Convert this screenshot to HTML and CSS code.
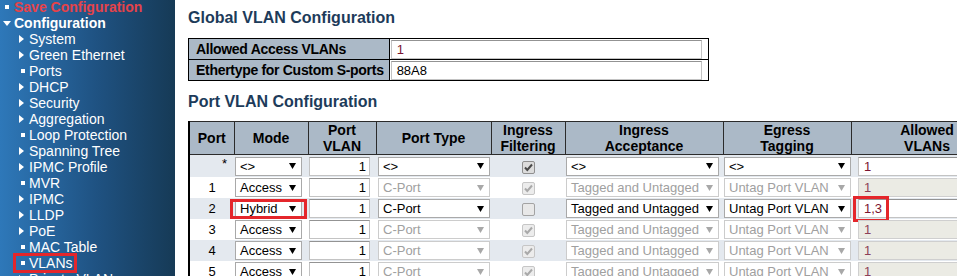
FILE: index.html
```html
<!DOCTYPE html>
<html lang="en">
<head>
    <meta charset="UTF-8">
    <title>VLAN Configuration</title>
    <link rel="stylesheet" href="styles.css">
</head>
<body>

    <nav class="menu">
        <ul>
            <li class="save"><i class="dot"></i>Save Configuration</li>
            <li class="group"><i class="down"></i>Configuration</li>
            <li class="item"><i class="more"></i>System</li>
            <li class="item"><i class="more"></i>Green Ethernet</li>
            <li class="item"><i class="dot"></i>Ports</li>
            <li class="item"><i class="more"></i>DHCP</li>
            <li class="item"><i class="more"></i>Security</li>
            <li class="item"><i class="more"></i>Aggregation</li>
            <li class="item"><i class="dot"></i>Loop Protection</li>
            <li class="item"><i class="more"></i>Spanning Tree</li>
            <li class="item"><i class="more"></i>IPMC Profile</li>
            <li class="item"><i class="dot"></i>MVR</li>
            <li class="item"><i class="more"></i>IPMC</li>
            <li class="item"><i class="more"></i>LLDP</li>
            <li class="item"><i class="more"></i>PoE</li>
            <li class="item"><i class="dot"></i>MAC Table</li>
            <li class="item marked"><i class="dot"></i>VLANs</li>
            <li class="item"><i class="more"></i>Private VLANs</li>
        </ul>
    </nav>

    <main class="content">
        <h1>Global VLAN Configuration</h1>
        <table class="config global">
            <tr>
                <th>Allowed Access VLANs</th>
                <td><div class="field vlan-text">1</div></td>
            </tr>
            <tr>
                <th>Ethertype for Custom S-ports</th>
                <td><div class="field">88A8</div></td>
            </tr>
        </table>

        <h1 class="second">Port VLAN Configuration</h1>
        <table class="config ports">
            <colgroup>
                <col class="c-port">
                <col class="c-mode">
                <col class="c-pvid">
                <col class="c-type">
                <col class="c-filter">
                <col class="c-accept">
                <col class="c-egress">
                <col class="c-allowed">
            </colgroup>
            <thead>
                <tr>
                    <th>Port</th>
                    <th>Mode</th>
                    <th>Port<br>VLAN</th>
                    <th>Port Type</th>
                    <th>Ingress<br>Filtering</th>
                    <th>Ingress<br>Acceptance</th>
                    <th>Egress<br>Tagging</th>
                    <th>Allowed<br>VLANs</th>
                </tr>
            </thead>
            <tbody>
                <tr>
                    <td class="port star">*</td>
                    <td><div class="sel mode"><span>&lt;&gt;</span><svg class="arrow" viewBox="0 0 7 6"><path d="M0 0h7L3.5 6z"/></svg></div></td>
                    <td><div class="field pvid">1</div></td>
                    <td class="pad2"><div class="sel type"><span>&lt;&gt;</span><svg class="arrow" viewBox="0 0 7 6"><path d="M0 0h7L3.5 6z"/></svg></div></td>
                    <td class="center"><span class="chk"><svg viewBox="0 0 11 11"><path d="M2 5.5l2.3 2.5L9 2.5"/></svg></span></td>
                    <td><div class="sel accept"><span>&lt;&gt;</span><svg class="arrow" viewBox="0 0 7 6"><path d="M0 0h7L3.5 6z"/></svg></div></td>
                    <td><div class="sel egress"><span>&lt;&gt;</span><svg class="arrow" viewBox="0 0 7 6"><path d="M0 0h7L3.5 6z"/></svg></div></td>
                    <td class="pad7"><div class="field allow">1</div></td>
                </tr>
                <tr>
                    <td class="port">1</td>
                    <td><div class="sel mode"><span>Access</span><svg class="arrow" viewBox="0 0 7 6"><path d="M0 0h7L3.5 6z"/></svg></div></td>
                    <td><div class="field pvid">1</div></td>
                    <td class="pad2"><div class="sel type off"><span>C-Port</span><svg class="arrow" viewBox="0 0 7 6"><path d="M0 0h7L3.5 6z"/></svg></div></td>
                    <td class="center"><span class="chk off"><svg viewBox="0 0 11 11"><path d="M2 5.5l2.3 2.5L9 2.5"/></svg></span></td>
                    <td><div class="sel accept off"><span>Tagged and Untagged</span><svg class="arrow" viewBox="0 0 7 6"><path d="M0 0h7L3.5 6z"/></svg></div></td>
                    <td><div class="sel egress off"><span>Untag Port VLAN</span><svg class="arrow" viewBox="0 0 7 6"><path d="M0 0h7L3.5 6z"/></svg></div></td>
                    <td class="pad7"><div class="field allow off">1</div></td>
                </tr>
                <tr>
                    <td class="port">2</td>
                    <td><div class="sel mode marked"><span>Hybrid</span><svg class="arrow" viewBox="0 0 7 6"><path d="M0 0h7L3.5 6z"/></svg></div></td>
                    <td><div class="field pvid">1</div></td>
                    <td class="pad2"><div class="sel type"><span>C-Port</span><svg class="arrow" viewBox="0 0 7 6"><path d="M0 0h7L3.5 6z"/></svg></div></td>
                    <td class="center"><span class="chk empty"></span></td>
                    <td><div class="sel accept"><span>Tagged and Untagged</span><svg class="arrow" viewBox="0 0 7 6"><path d="M0 0h7L3.5 6z"/></svg></div></td>
                    <td><div class="sel egress"><span>Untag Port VLAN</span><svg class="arrow" viewBox="0 0 7 6"><path d="M0 0h7L3.5 6z"/></svg></div></td>
                    <td class="pad7"><div class="field allow marked">1,3</div></td>
                </tr>
                <tr>
                    <td class="port">3</td>
                    <td><div class="sel mode"><span>Access</span><svg class="arrow" viewBox="0 0 7 6"><path d="M0 0h7L3.5 6z"/></svg></div></td>
                    <td><div class="field pvid">1</div></td>
                    <td class="pad2"><div class="sel type off"><span>C-Port</span><svg class="arrow" viewBox="0 0 7 6"><path d="M0 0h7L3.5 6z"/></svg></div></td>
                    <td class="center"><span class="chk off"><svg viewBox="0 0 11 11"><path d="M2 5.5l2.3 2.5L9 2.5"/></svg></span></td>
                    <td><div class="sel accept off"><span>Tagged and Untagged</span><svg class="arrow" viewBox="0 0 7 6"><path d="M0 0h7L3.5 6z"/></svg></div></td>
                    <td><div class="sel egress off"><span>Untag Port VLAN</span><svg class="arrow" viewBox="0 0 7 6"><path d="M0 0h7L3.5 6z"/></svg></div></td>
                    <td class="pad7"><div class="field allow off">1</div></td>
                </tr>
                <tr>
                    <td class="port">4</td>
                    <td><div class="sel mode"><span>Access</span><svg class="arrow" viewBox="0 0 7 6"><path d="M0 0h7L3.5 6z"/></svg></div></td>
                    <td><div class="field pvid">1</div></td>
                    <td class="pad2"><div class="sel type off"><span>C-Port</span><svg class="arrow" viewBox="0 0 7 6"><path d="M0 0h7L3.5 6z"/></svg></div></td>
                    <td class="center"><span class="chk off"><svg viewBox="0 0 11 11"><path d="M2 5.5l2.3 2.5L9 2.5"/></svg></span></td>
                    <td><div class="sel accept off"><span>Tagged and Untagged</span><svg class="arrow" viewBox="0 0 7 6"><path d="M0 0h7L3.5 6z"/></svg></div></td>
                    <td><div class="sel egress off"><span>Untag Port VLAN</span><svg class="arrow" viewBox="0 0 7 6"><path d="M0 0h7L3.5 6z"/></svg></div></td>
                    <td class="pad7"><div class="field allow off">1</div></td>
                </tr>
                <tr>
                    <td class="port">5</td>
                    <td><div class="sel mode"><span>Access</span><svg class="arrow" viewBox="0 0 7 6"><path d="M0 0h7L3.5 6z"/></svg></div></td>
                    <td><div class="field pvid">1</div></td>
                    <td class="pad2"><div class="sel type off"><span>C-Port</span><svg class="arrow" viewBox="0 0 7 6"><path d="M0 0h7L3.5 6z"/></svg></div></td>
                    <td class="center"><span class="chk off"><svg viewBox="0 0 11 11"><path d="M2 5.5l2.3 2.5L9 2.5"/></svg></span></td>
                    <td><div class="sel accept off"><span>Tagged and Untagged</span><svg class="arrow" viewBox="0 0 7 6"><path d="M0 0h7L3.5 6z"/></svg></div></td>
                    <td><div class="sel egress off"><span>Untag Port VLAN</span><svg class="arrow" viewBox="0 0 7 6"><path d="M0 0h7L3.5 6z"/></svg></div></td>
                    <td class="pad7"><div class="field allow off">1</div></td>
                </tr>
            </tbody>
        </table>
    </main>

</body>
</html>
```

FILE: styles.css
```css
html, body {
    margin: 0;
    padding: 0;
    height: 100%;
    overflow: hidden;
}

body {
    display: flex;
    font-family: "Liberation Sans", Arial, sans-serif;
    background-color: #ffffff;
    color: #000;
}

/* Left menu */
.menu {
    flex: 0 0 175px;
    background: linear-gradient(to right, #2e78b9, #1f5282 55%, #163a56);
}

.menu ul {
    list-style: none;
    margin: -1px 0 0;
    padding: 0;
}

.menu li {
    display: flex;
    align-items: center;
    height: 16px;
    line-height: 16px;
    font-size: 14px;
    color: #fff;
    white-space: nowrap;
    position: relative;
}

.menu .save {
    padding-left: 5px;
    color: #e5434a;
    font-weight: bold;
}

.menu .group {
    padding-left: 3px;
    font-weight: bold;
}

.menu .item {
    padding-left: 19px;
}

.dot {
    width: 4px;
    height: 4px;
    background: #fff;
    margin-right: 5px;
    flex-shrink: 0;
}

.item .dot {
    margin-left: 2px;
    margin-right: 4px;
}

.down {
    width: 0;
    height: 0;
    border-top: 5px solid #fff;
    border-left: 4px solid transparent;
    border-right: 4px solid transparent;
    margin-right: 3px;
}

.more {
    width: 0;
    height: 0;
    border-left: 5px solid #fff;
    border-top: 4px solid transparent;
    border-bottom: 4px solid transparent;
    margin-right: 5px;
}

/* red annotation frames */
.menu li.marked::after {
    content: "";
    position: absolute;
    left: 13px;
    top: -2px;
    width: 64px;
    height: 20px;
    box-sizing: border-box;
    border: 3px solid #e4262b;
}

/* Content */
.content {
    flex: none;
    padding: 9px 0 0 13px;
}

h1 {
    font-size: 16px;
    line-height: 18px;
    margin: 0 0 11px;
    color: #1d3b5a;
}

h1.second {
    margin: 12px 0 10px;
}

.config {
    border-collapse: collapse;
}

.config th {
    background-color: #abb9c7;
    font-size: 14px;
    font-weight: bold;
    border: 1px solid #000;
}

.global th {
    text-align: left;
    padding: 0 5px 0 7px;
    height: 20px;
    white-space: nowrap;
    letter-spacing: -0.3px;
}

.global td {
    border: 1px solid #000;
    padding: 0 6px 0 1px;
}

.field {
    box-sizing: border-box;
    height: 19px;
    border: 1px solid #c3c3c3;
    border-top-color: #939393;
    background: #fff;
    font-size: 13px;
    line-height: 17px;
    padding-left: 5px;
    white-space: nowrap;
}

.global .field {
    width: 311px;
}

.vlan-text {
    color: #7b1430;
}

/* Port table */
.ports {
    table-layout: fixed;
    width: 814px;
    border-left: 2px solid #000;
}

.c-port { width: 45px; }
.c-mode { width: 74px; }
.c-pvid { width: 68px; }
.c-type { width: 115px; }
.c-filter { width: 74px; }
.c-accept { width: 158px; }
.c-egress { width: 128px; }
.c-allowed { width: 152px; }

.ports thead th {
    height: 32px;
    line-height: 16px;
    text-align: center;
    padding: 0;
    border-color: #2b2b2b;
}

.ports tbody td {
    height: 21px;
    padding: 0 0 0 1px;
    font-size: 13px;
    vertical-align: middle;
}

.ports tbody tr:nth-child(odd) {
    background-color: #e4e9ef;
}

.ports td.port {
    text-align: center;
    padding: 0;
}

.ports td.star {
    text-align: right;
    padding-right: 7px;
    vertical-align: top;
    padding-top: 1px;
}

.ports td.pad2 { padding-left: 2px; }
.ports td.pad7 { padding-left: 7px; }
.ports td.center { text-align: center; padding: 0; }

.sel {
    box-sizing: border-box;
    display: flex;
    align-items: center;
    justify-content: space-between;
    height: 19px;
    border: 1px solid #a9a9a9;
    background: #fff;
    padding: 0 5px 0 4px;
    white-space: nowrap;
    color: #000;
    position: relative;
}

.sel.off {
    color: #a0a0a0;
    border-color: #cccccc;
}

.arrow {
    width: 7px;
    height: 6px;
    fill: currentColor;
    flex-shrink: 0;
}

.sel.off .arrow {
    fill: #a8a8a8;
}

.mode { width: 67px; }
.type { width: 112px; }
.accept { width: 153px; }
.egress { width: 127px; }

.pvid {
    width: 61px;
    text-align: right;
    padding: 0 3px 0 0;
}

.allow {
    width: 150px;
    color: #7b1430;
    position: relative;
}

.allow.off {
    background: #ebebe4;
    border-color: #cfcfcf;
    color: #8c4058;
}

.sel.marked::after {
    content: "";
    position: absolute;
    left: -6px;
    right: -6px;
    top: -1px;
    bottom: -2px;
    border: 3px solid #e4262b;
}

.allow.marked::after {
    content: "";
    position: absolute;
    left: -6px;
    top: -4px;
    width: 36px;
    height: 26px;
    box-sizing: border-box;
    border: 3px solid #e4262b;
}

/* checkboxes */
.chk {
    display: inline-block;
    box-sizing: border-box;
    width: 13px;
    height: 13px;
    border: 1px solid #8f8f8f;
    border-radius: 2px;
    background: #dcdcdc;
    vertical-align: middle;
}

.chk svg {
    display: block;
    width: 11px;
    height: 11px;
    fill: none;
    stroke: #4a4a4a;
    stroke-width: 2;
}

.chk.off {
    border-color: #c6c6c6;
    background: #ececec;
}

.chk.off svg {
    stroke: #a9a9a9;
}

.chk.empty {
    background: #e8e8e8;
    border-color: #a3a3a3;
}
```
